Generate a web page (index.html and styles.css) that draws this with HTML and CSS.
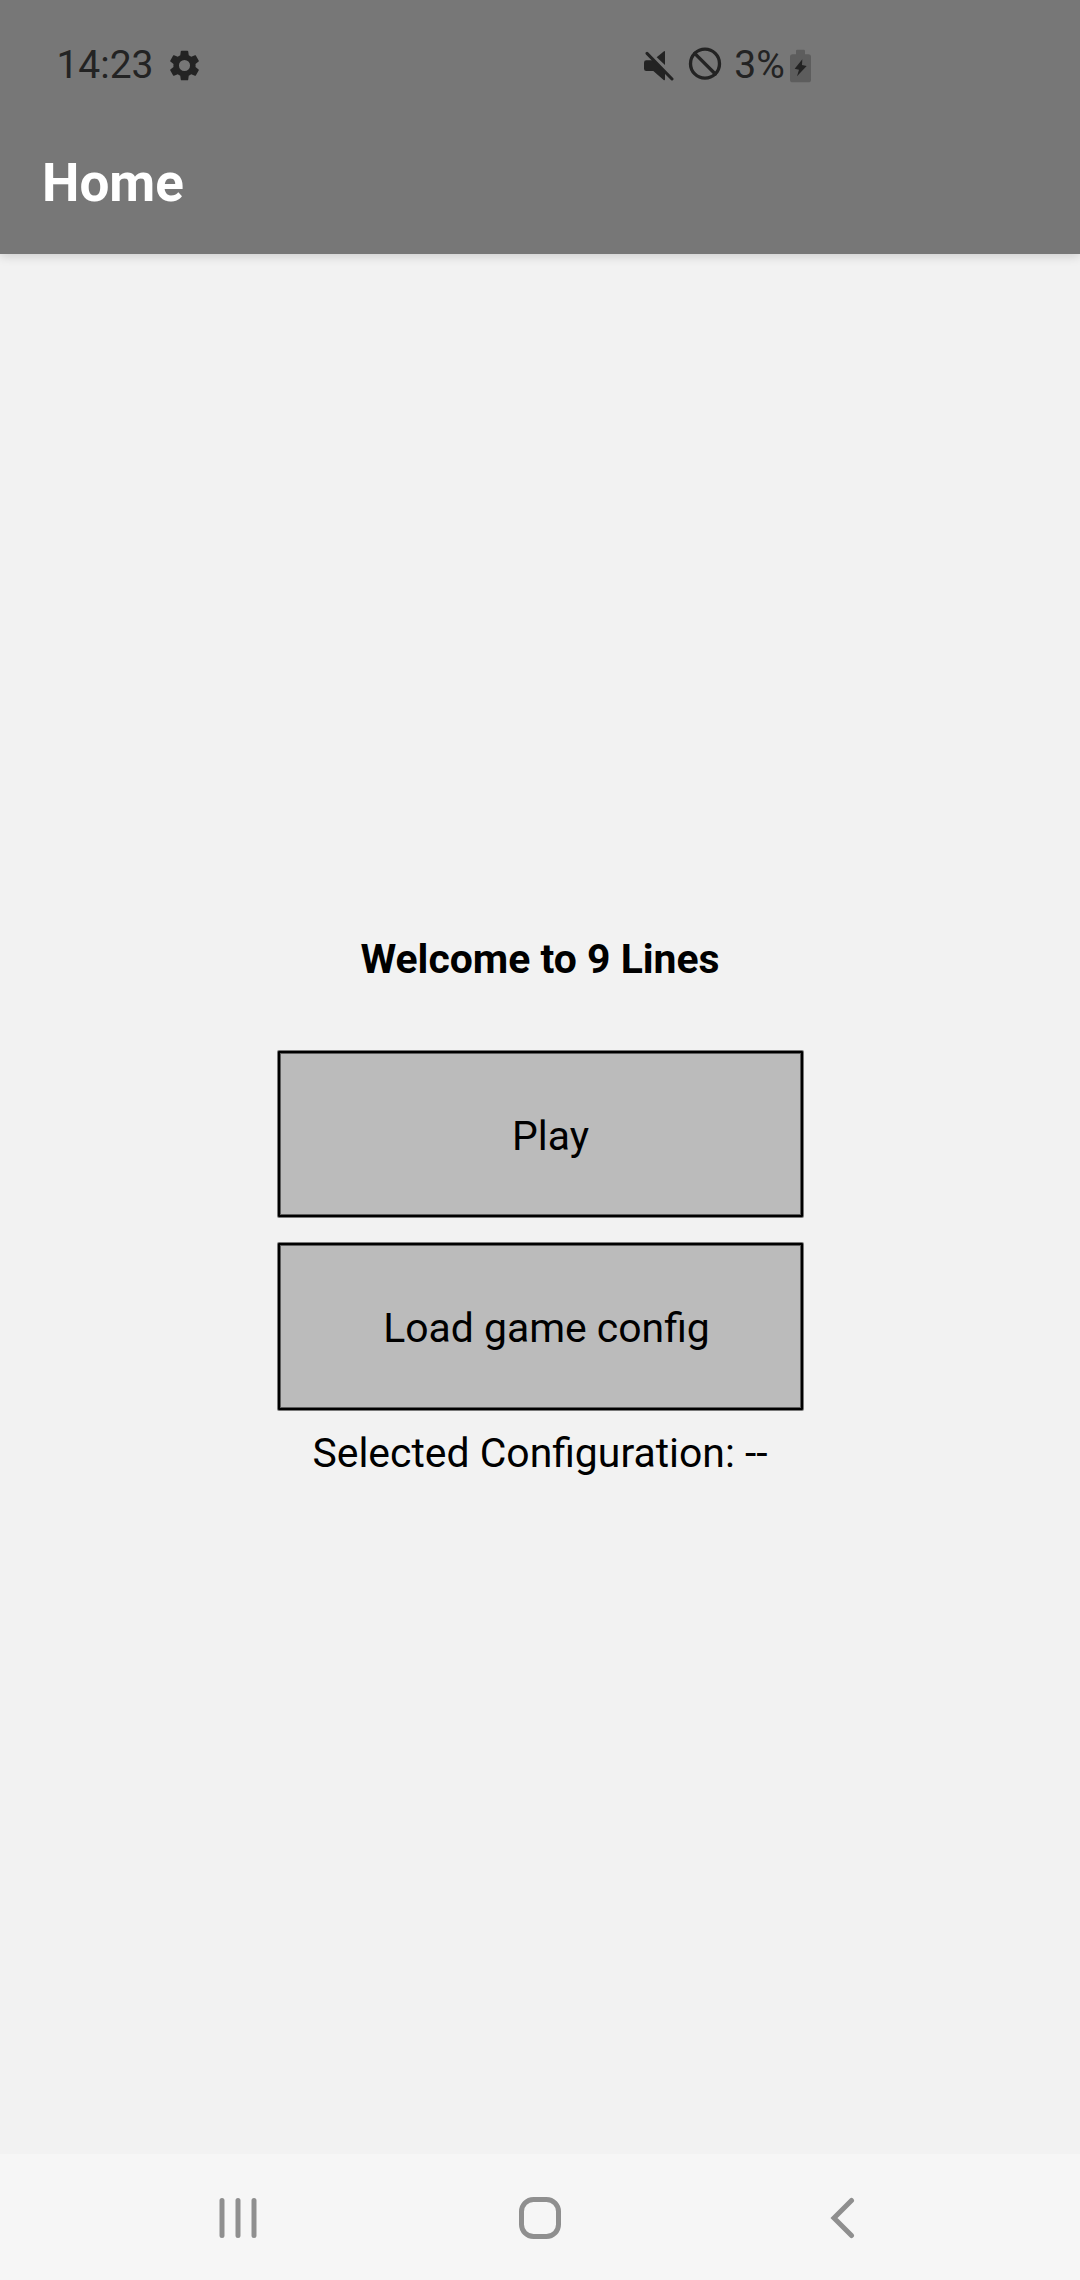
FILE: index.html
```html
<!DOCTYPE html>
<html lang="en">
<head>
<meta charset="utf-8">
<title>Home</title>
<link rel="stylesheet" href="styles.css">
</head>
<body>
<div class="screen">
  <header class="header">
    <div class="status">
      <span>14:23</span>
      <svg class="gear" viewBox="0 0 24 24"><path fill-rule="evenodd" d="M19.14 12.94c.04-.3.06-.61.06-.94 0-.32-.02-.64-.07-.94l2.03-1.58c.18-.14.23-.41.12-.61l-1.92-3.32c-.12-.22-.37-.29-.59-.22l-2.39.96c-.5-.38-1.03-.7-1.62-.94l-.36-2.54c-.04-.24-.24-.41-.48-.41h-3.84c-.24 0-.43.17-.47.41l-.36 2.54c-.59.24-1.13.57-1.62.94l-2.39-.96c-.22-.08-.47 0-.59.22L2.74 8.87c-.12.21-.08.47.12.61l2.03 1.58c-.05.3-.09.63-.09.94s.02.64.07.94l-2.03 1.58c-.18.14-.23.41-.12.61l1.92 3.32c.12.22.37.29.59.22l2.39-.96c.5.38 1.03.7 1.62.94l.36 2.54c.05.24.24.41.48.41h3.84c.24 0 .44-.17.47-.41l.36-2.54c.59-.24 1.13-.56 1.62-.94l2.39.96c.22.08.47 0 .59-.22l1.92-3.32c.12-.22.07-.47-.12-.61l-2.01-1.58zM12 15.6a3.6 3.6 0 1 1 0-7.2 3.6 3.6 0 0 1 0 7.2z"/></svg>
      <svg class="mute" viewBox="42 50 90 102"><path d="M80 81 102 63Q105 61 105 65V104Z"/><path d="M49 90H72L105 124V147Q105 152 100 148L70 122H49Q42 122 42 115V97Q42 90 49 90Z"/><path class="slash" d="M51 69 126 146"/></svg>
      <svg class="ban" viewBox="174 50 102 102"><circle cx="225" cy="100" r="43.5"/><path d="M194 69 256 131"/></svg>
      <span class="percent">3%</span>
      <svg class="battery" viewBox="480 56 63 102"><path class="cell" d="M498 72V62Q498 58 502 58H521Q525 58 525 62V72H535Q543 72 543 80V148Q543 156 535 156H488Q480 156 480 148V80Q480 72 488 72Z"/><path d="M517 87 494 115 507 118 501 138 530 107 516 104Z"/></svg>
    </div>
    <h1 class="title">Home</h1>
  </header>
  <main class="content">
    <h2 class="welcome">Welcome to 9 Lines</h2>
    <button class="button play">Play</button>
    <button class="button load">Load game config</button>
    <p class="selected">Selected Configuration: --</p>
  </main>
  <nav class="nav">
    <svg class="recents" viewBox="0 0 38 42"><path d="M3 3.5v35M19 3.5v35M35 3.5v35"/></svg>
    <svg class="home" viewBox="0 0 42 42"><rect x="2.5" y="2.5" width="37" height="37" rx="12"/></svg>
    <svg class="back" viewBox="0 0 25 42"><path d="M21.5 3.5 4 21 21.5 38.5"/></svg>
  </nav>
</div>
</body>
</html>
```
FILE: styles.css
```css
* { box-sizing: border-box; }
body {
  margin: 0;
  font-family: "Roboto", sans-serif;
  font-size: 40.9px;
  color: #000;
}
.screen {
  display: flex;
  flex-direction: column;
  width: 1080px;
  height: 2280px;
  background: #f2f2f2;
}
.header {
  height: 254px;
  padding-top: 41px;
  background: #777;
  box-shadow: 0 2px 10px rgba(0, 0, 0, .16);
}
.status {
  display: flex;
  align-items: center;
  height: 48px;
  padding-left: 56.4px;
  font-size: 39px;
  line-height: 48px;
  color: #232323;
  fill: #232323;
}
.status svg { flex: none; }
.gear { width: 37px; height: 37px; margin: 1px 0 0 12.3px; }
.mute { width: 30px; height: 34px; margin-left: 441px; }
.mute .slash, .ban { stroke: #232323; stroke-linecap: round; }
.mute .slash { stroke-width: 9; }
.ban { width: 34px; height: 34px; margin-left: 14px; margin-top: -3px; fill: none; stroke-width: 10; }
.mute { margin-top: -2px; }
.percent { margin-left: 12.5px; }
.battery { width: 21px; height: 34px; margin-left: 4.8px; margin-top: 1px; }
.battery .cell { fill: #5d5d5d; }
.title {
  margin: 62px 0 0 42px;
  font-size: 53px;
  font-weight: 700;
  line-height: 64px;
  color: #fff;
}
.content {
  flex: 1;
  display: flex;
  flex-direction: column;
  align-items: center;
  padding-top: 681px;
}
.welcome {
  margin: 0 0 68px;
  font-size: 40.9px;
  font-weight: 700;
  line-height: 48px;
}
.button {
  width: 525px;
  height: 166px;
  margin: 0 0 26px 1px;
  border: 2px solid #000;
  border-radius: 1px;
  background: #bbb;
  box-shadow: 0 0 0 1px rgba(0, 0, 0, .5), inset 0 0 0 1px rgba(0, 0, 0, .5);
  font: 40.9px/48px "Roboto", sans-serif;
  color: #000;
}
.play { padding: 4px 0 0 20px; }
.load { height: 167px; margin-bottom: 19px; padding: 3px 0 0 12px; }
.selected { margin: 0; line-height: 48px; }
.nav {
  display: flex;
  align-items: flex-start;
  height: 126px;
  padding: 43px 0 0 219px;
  background: #f6f6f6;
  fill: none;
  stroke: #8f8f8f;
  stroke-width: 5;
  stroke-linecap: round;
}
.recents { width: 38px; height: 42px; }
.home { width: 42px; height: 42px; margin-left: 262px; }
.back { width: 25px; height: 42px; margin-left: 269px; }
```
